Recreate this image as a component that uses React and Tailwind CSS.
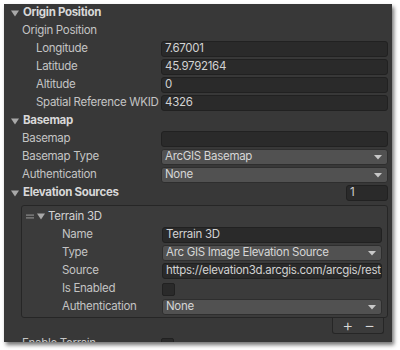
import React from "react";

const Tri = () => (
  <svg width="8" height="7" viewBox="0 0 8 7" className="shrink-0">
    <path d="M0 0.5 L8 0.5 L4 6.5 Z" fill="#a8a8a8" />
  </svg>
);

const Arrow = () => (
  <svg width="8" height="5" viewBox="0 0 8 5" className="shrink-0">
    <path d="M0 0 L8 0 L4 4.5 Z" fill="#c8c8c8" />
  </svg>
);

function Field({ children }) {
  return (
    <div className="flex-1 h-[16px] bg-[#2a2a2a] border border-[#212121] rounded-[3px] flex items-center px-[3px] text-[#d2d2d2] overflow-hidden whitespace-nowrap">
      {children}
    </div>
  );
}

function Drop({ children }) {
  return (
    <div className="flex-1 h-[16px] bg-[#515151] border border-[#2e2e2e] rounded-[3px] flex items-center pl-[3px] pr-[5px] text-[#d6d6d6] overflow-hidden whitespace-nowrap">
      <span className="flex-1">{children}</span>
      <Arrow />
    </div>
  );
}

function Row({ label, labelW, pl, children }) {
  return (
    <div className="flex items-center h-[18px]">
      <div className={`shrink-0 text-[#c4c4c4] whitespace-nowrap ${labelW} ${pl}`}>{label}</div>
      {children}
    </div>
  );
}

function Header({ children, right }) {
  return (
    <div className="flex items-center h-[18px] pl-[7px]">
      <Tri />
      <span className="ml-[4px] font-bold text-[#d8d8d8] flex-1">{children}</span>
      {right}
    </div>
  );
}

export default function App() {
  const topW = "w-[157px]";
  return (
    <div className="w-[400px] h-[350px] bg-white pt-[4px] pl-[4px]" style={{ fontFamily: "Inter, 'Noto Sans', sans-serif" }}>
      <div className="w-[388px] h-[338px] bg-[#383838] overflow-hidden shadow-[2px_3px_4px_rgba(0,0,0,0.55)] text-[11.5px] tracking-[-0.3px] leading-none pr-[4px]">
        <div>
          <Header>Origin Position</Header>
          <Row label="Origin Position" labelW={topW} pl="pl-[18px]" />
          <Row label="Longitude" labelW={topW} pl="pl-[32px]"><Field>7.67001</Field></Row>
          <Row label="Latitude" labelW={topW} pl="pl-[32px]"><Field>45.9792164</Field></Row>
          <Row label="Altitude" labelW={topW} pl="pl-[32px]"><Field>0</Field></Row>
          <Row label="Spatial Reference WKID" labelW={topW} pl="pl-[32px]"><Field>4326</Field></Row>
          <Header>Basemap</Header>
          <Row label="Basemap" labelW={topW} pl="pl-[18px]"><Field></Field></Row>
          <Row label="Basemap Type" labelW={topW} pl="pl-[18px]"><Drop>ArcGIS Basemap</Drop></Row>
          <Row label="Authentication" labelW={topW} pl="pl-[18px]"><Drop>None</Drop></Row>
          <Header
            right={
              <div className="w-[42px] h-[16px] bg-[#2a2a2a] border border-[#212121] rounded-[3px] flex items-center px-[3px] text-[#d2d2d2]">1</div>
            }
          >
            Elevation Sources
          </Header>
          <div className="ml-[17px] mt-[3px] border border-[#262626] rounded-[3px] bg-[#3b3b3b] pt-[1px] pb-[1px] pr-[5px]">
            <div className="flex items-center h-[19px] pl-[4px]">
              <svg width="8" height="5" viewBox="0 0 8 5" className="shrink-0 mr-[3px]">
                <rect x="0" y="0.5" width="8" height="1.2" fill="#8a8a8a" />
                <rect x="0" y="3.3" width="8" height="1.2" fill="#8a8a8a" />
              </svg>
              <Tri />
              <span className="ml-[3px] text-[#d2d2d2]">Terrain 3D</span>
            </div>
            <Row label="Name" labelW="w-[140px]" pl="pl-[40px]"><Field>Terrain 3D</Field></Row>
            <Row label="Type" labelW="w-[140px]" pl="pl-[40px]"><Drop>Arc GIS Image Elevation Source</Drop></Row>
            <Row label="Source" labelW="w-[140px]" pl="pl-[40px]"><Field>https://elevation3d.arcgis.com/arcgis/rest</Field></Row>
            <Row label="Is Enabled" labelW="w-[140px]" pl="pl-[40px]">
              <div className="w-[13px] h-[13px] bg-[#2a2a2a] border border-[#212121] rounded-[2px]" />
            </Row>
            <Row label="Authentication" labelW="w-[140px]" pl="pl-[40px]"><Drop>None</Drop></Row>
          </div>
          <div className="flex justify-end pr-[4px]">
            <div className="w-[52px] h-[16px] border border-t-0 border-[#262626] rounded-b-[3px] bg-[#3b3b3b] flex items-center justify-center gap-[11px] pl-[1px] text-[#d8d8d8] text-[17px] font-light">
              <span>+</span>
              <span>−</span>
            </div>
          </div>
          <div className="flex items-center h-[18px] mt-[1px]">
            <div className="w-[157px] pl-[18px] text-[#c4c4c4]">Enable Terrain</div>
            <div className="w-[13px] h-[13px] bg-[#2a2a2a] border border-[#212121] rounded-[2px]" />
          </div>
        </div>
      </div>
    </div>
  );
}
